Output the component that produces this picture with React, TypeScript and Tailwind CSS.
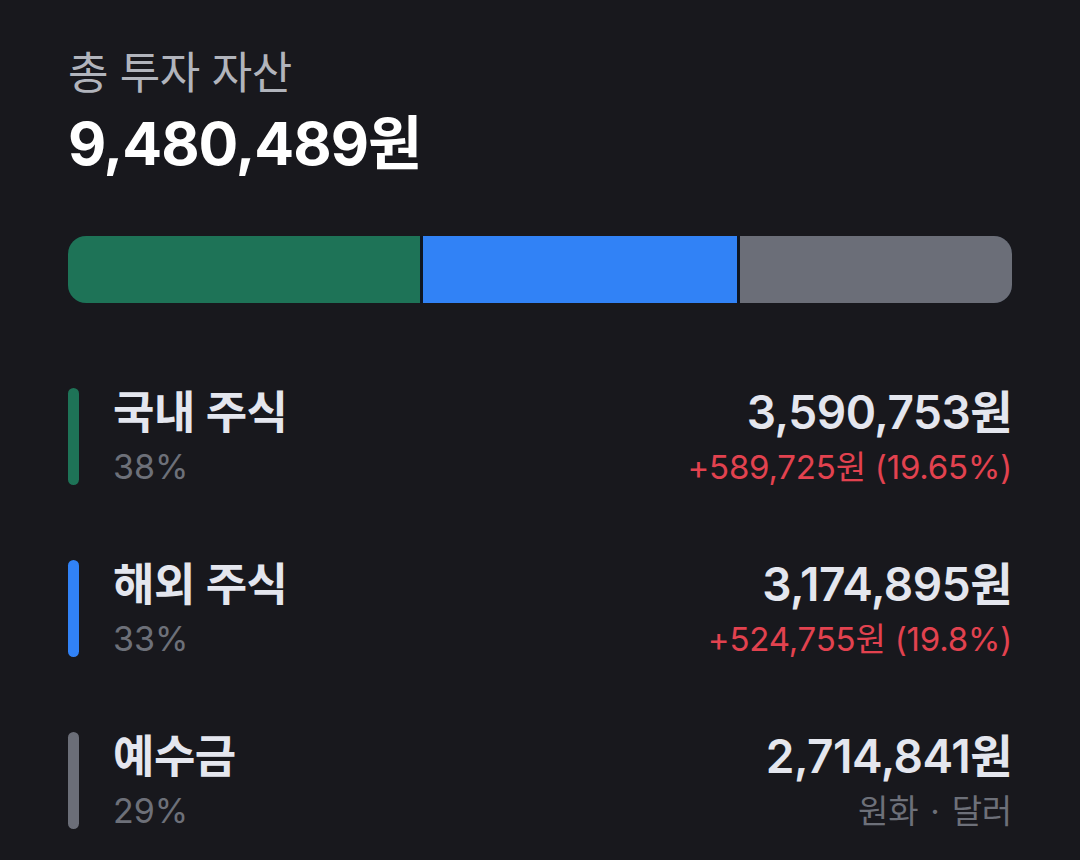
import React from 'react';

interface Holding {
  name: string;
  share: string;
  amount: string;
  bar: string;
  sub: React.ReactNode;
  subTone: 'gain' | 'muted';
}

const holdings: Holding[] = [
  {
    name: '국내 주식',
    share: '38%',
    amount: '3,590,753원',
    bar: 'bg-[#1e7357]',
    sub: '+589,725원 (19.65%)',
    subTone: 'gain',
  },
  {
    name: '해외 주식',
    share: '33%',
    amount: '3,174,895원',
    bar: 'bg-[#3182f6]',
    sub: '+524,755원 (19.8%)',
    subTone: 'gain',
  },
  {
    name: '예수금',
    share: '29%',
    amount: '2,714,841원',
    bar: 'bg-[#6b6e78]',
    sub: (
      <>
        원화<span className="mx-[12px]">·</span>달러
      </>
    ),
    subTone: 'muted',
  },
];

const font = { fontFamily: 'Inter, "Noto Sans CJK KR", sans-serif' };

const HoldingRow = ({ item }: { item: Holding }) => (
  <div className="flex h-[97px]">
    <div className={`w-[11px] rounded-full ${item.bar}`} />
    <div className="ml-[34px] flex flex-col">
      <span className="text-[45px] leading-[50px] font-semibold text-[#e4e6ee] tracking-[-0.5px]">
        {item.name}
      </span>
      <span className="mt-[9px] text-[34px] leading-[40px] text-[#6d7079]">{item.share}</span>
    </div>
    <div className="ml-auto flex flex-col items-end">
      <span className="-mt-[2px] text-[46px] leading-[52px] font-semibold text-[#e4e6ee] tracking-[-0.5px]">
        {item.amount}
      </span>
      <span
        className={`mt-[9px] text-[33px] leading-[40px] tracking-[-0.2px] ${
          item.subTone === 'gain' ? 'text-[#e2424f]' : 'text-[#6d7079]'
        }`}
      >
        {item.sub}
      </span>
    </div>
  </div>
);

export default function App() {
  return (
    <div className="w-[1080px] h-[860px] bg-[#18181d] px-[68px] pt-[46px] overflow-hidden" style={font}>
      <div className="text-[44px] leading-[54px] text-[#b1b4bc] tracking-[-0.5px]">총 투자 자산</div>
      <div className="mt-[10px] text-[59px] leading-[68px] font-bold text-white tracking-[-1px]">9,480,489원</div>

      <div className="mt-[58px] flex h-[67px] gap-[3px] rounded-[18px] overflow-hidden bg-[#0e1624]">
        <div className="w-[352px] bg-[#1e7357]" />
        <div className="w-[314px] bg-[#3182f6]" />
        <div className="flex-1 bg-[#6b6e78]" />
      </div>

      <div className="mt-[85px] flex flex-col gap-[75px]">
        {holdings.map((item) => (
          <HoldingRow key={item.name} item={item} />
        ))}
      </div>
    </div>
  );
}
